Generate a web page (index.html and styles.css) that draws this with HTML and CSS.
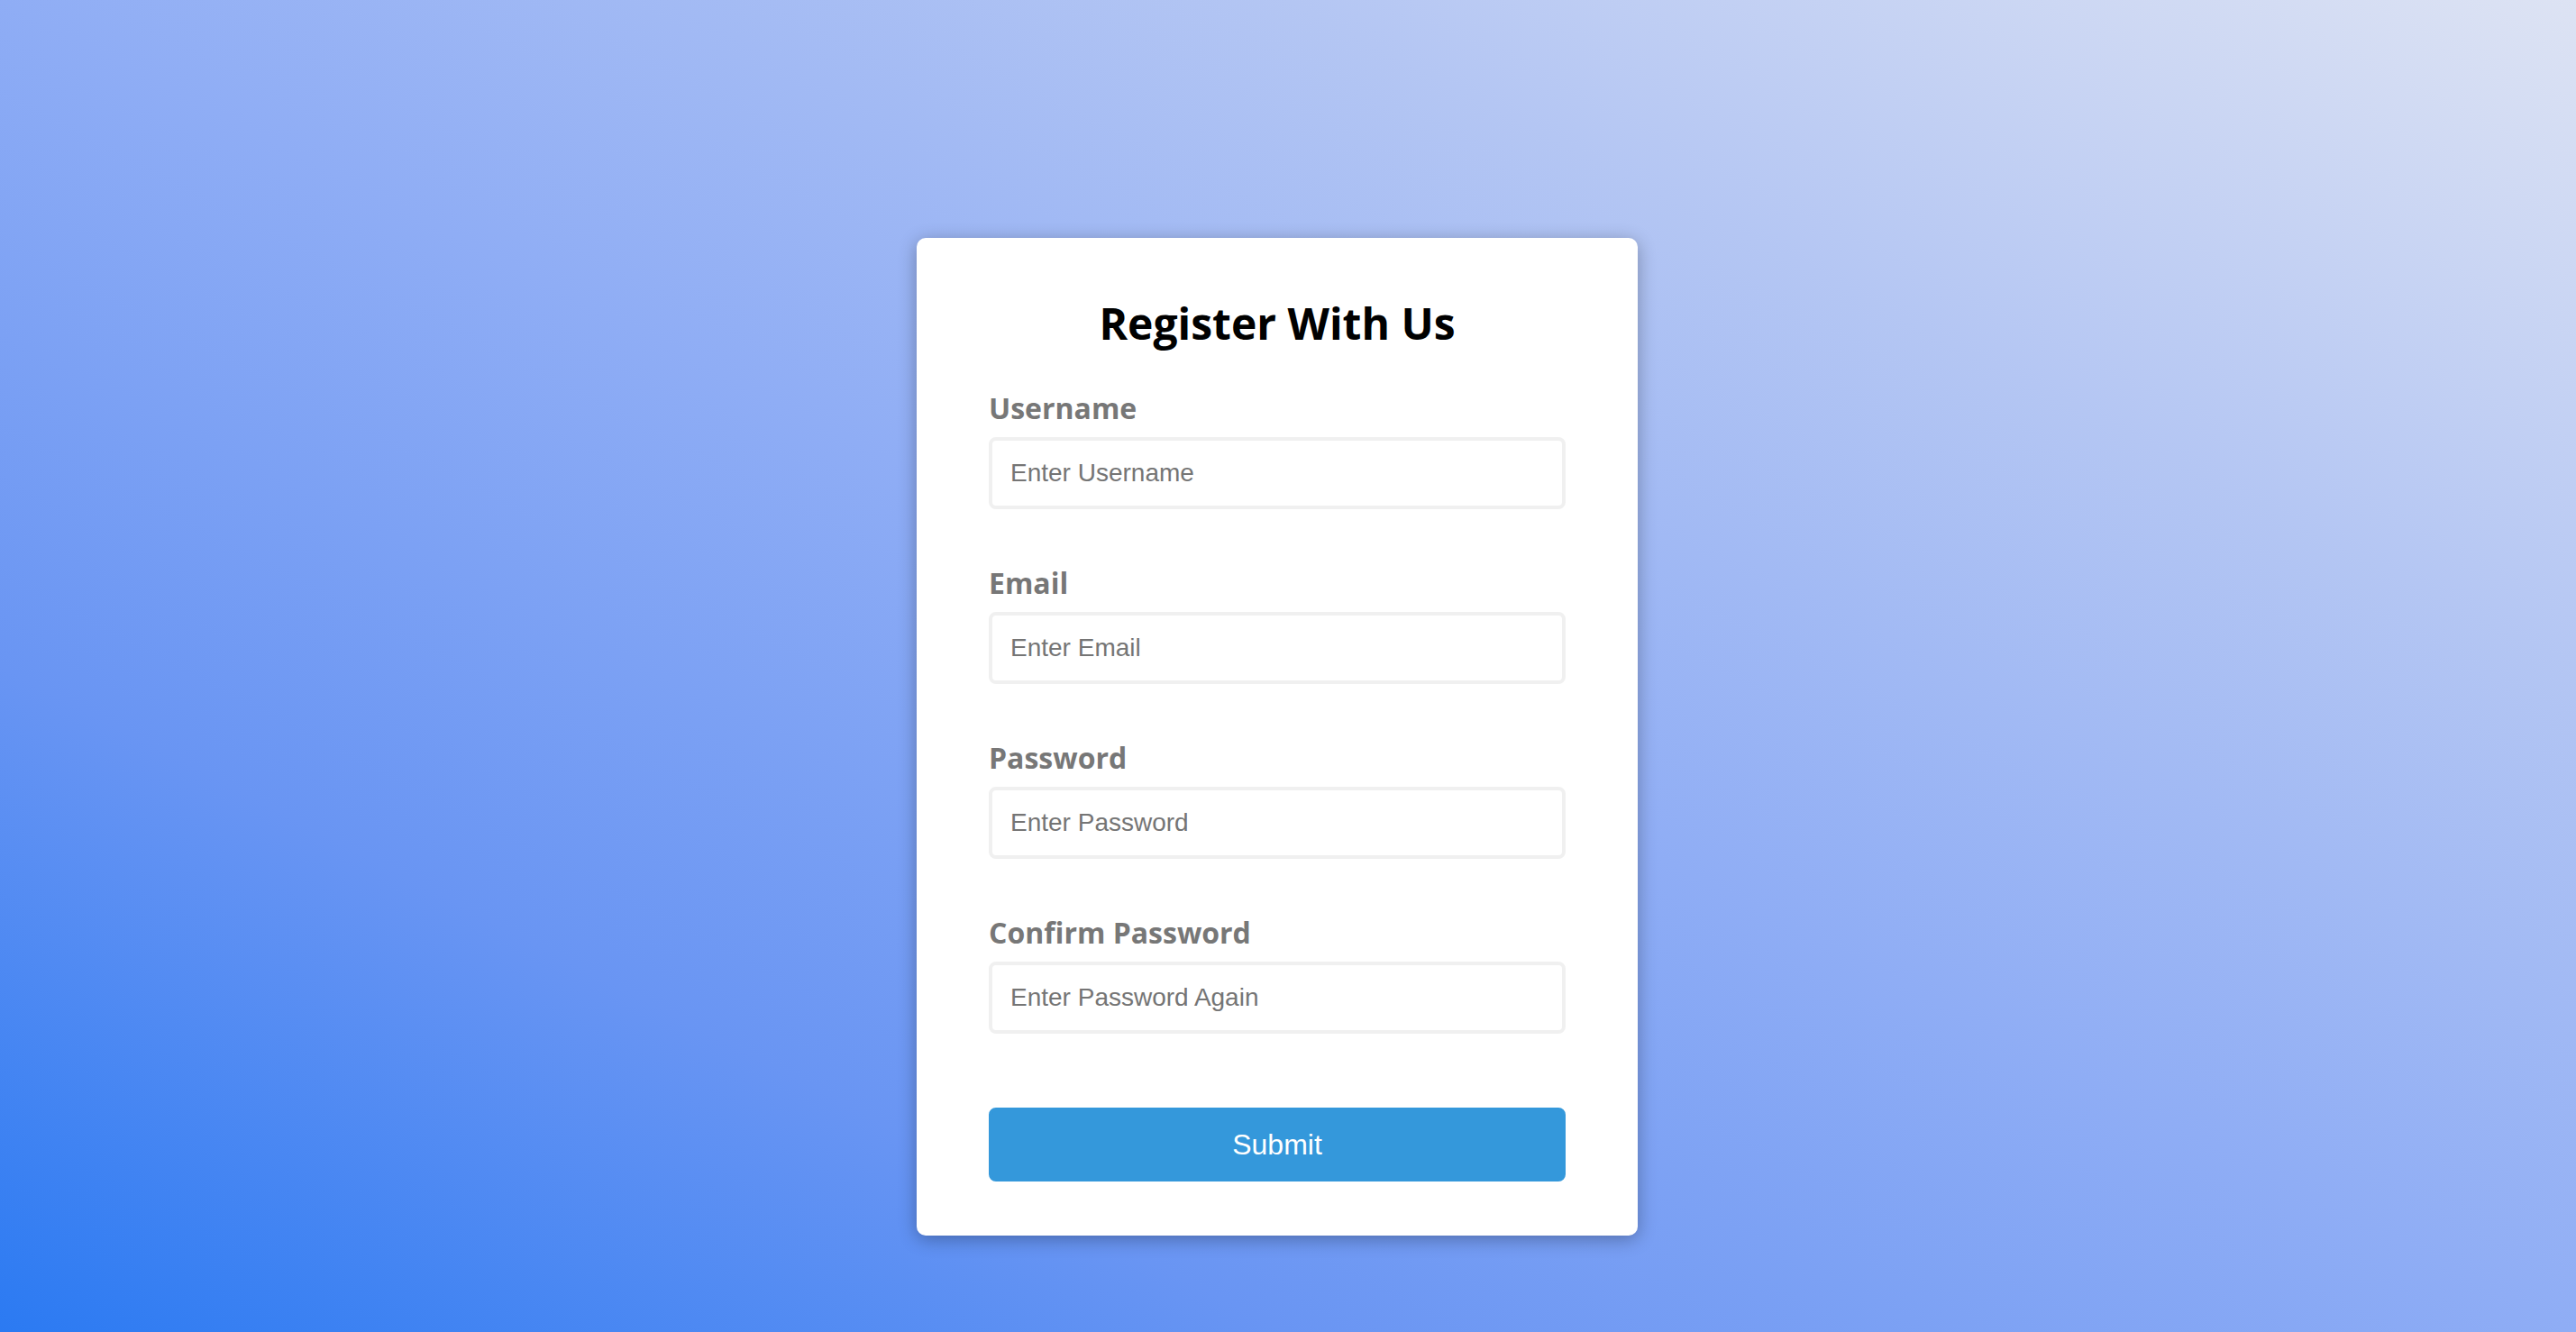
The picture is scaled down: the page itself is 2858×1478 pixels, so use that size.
FILE: index.html
```html
<!DOCTYPE html>
<html lang="en">
<head>
<meta charset="UTF-8">
<title>Register With Us</title>
<link rel="stylesheet" href="styles.css">
</head>
<body>
<div class="page">
  <div class="container">
    <form class="form" onsubmit="return false;">
      <h2 class="title">Register With Us</h2>
      <div class="form-control">
        <label for="username">Username</label>
        <input type="text" id="username" placeholder="Enter Username">
      </div>
      <div class="form-control">
        <label for="email">Email</label>
        <input type="text" id="email" placeholder="Enter Email">
      </div>
      <div class="form-control">
        <label for="password">Password</label>
        <input type="password" id="password" placeholder="Enter Password">
      </div>
      <div class="form-control">
        <label for="password2">Confirm Password</label>
        <input type="password" id="password2" placeholder="Enter Password Again">
      </div>
      <button type="submit" class="submit">Submit</button>
    </form>
  </div>
</div>
</body>
</html>
```
FILE: styles.css
```css
* { box-sizing: border-box; }

html, body {
  margin: 0;
  padding: 0;
  height: 100%;
}

body {
  font-family: "Open Sans", "Liberation Sans", sans-serif;
  background: linear-gradient(to top right,
    #2b7af2 0%,
    #6995f3 25%,
    #8fadf5 50%,
    #b4c6f3 75%,
    #dde3f3 100%);
  overflow: hidden;
}

.page {
  min-height: 100vh;
  display: flex;
  justify-content: center;
  align-items: flex-start;
  padding: 264px 24px 0 0;
}

.container {
  background-color: #fff;
  border-radius: 10px;
  box-shadow: 0 4px 20px rgba(0, 0, 0, 0.3);
  width: 800px;
}

.form {
  padding: 62px 80px 60px;
}

.title {
  text-align: center;
  margin: 0 0 40px;
  font-size: 48px;
  font-weight: 700;
  line-height: 65px;
  color: #000;
}

.form-control {
  margin-bottom: 20px;
  padding-bottom: 40px;
}

.form-control label {
  color: #777;
  display: block;
  margin-bottom: 10px;
  font-size: 32px;
  font-weight: 700;
  line-height: 44px;
}

.form-control input {
  border: 4px solid #f0f0f0;
  border-radius: 8px;
  display: block;
  width: 100%;
  height: 80px;
  padding: 0 20px;
  font-family: "Liberation Sans", Arial, sans-serif;
  font-size: 28px;
  color: #333;
  background: #fff;
  outline: none;
}

.form-control input::placeholder {
  color: #757575;
}

.submit {
  display: block;
  width: 100%;
  height: 82px;
  margin-top: 42px;
  background-color: #3498db;
  border: 4px solid #3498db;
  border-radius: 8px;
  color: #fff;
  font-family: "Liberation Sans", Arial, sans-serif;
  font-size: 32px;
  cursor: pointer;
}
```
